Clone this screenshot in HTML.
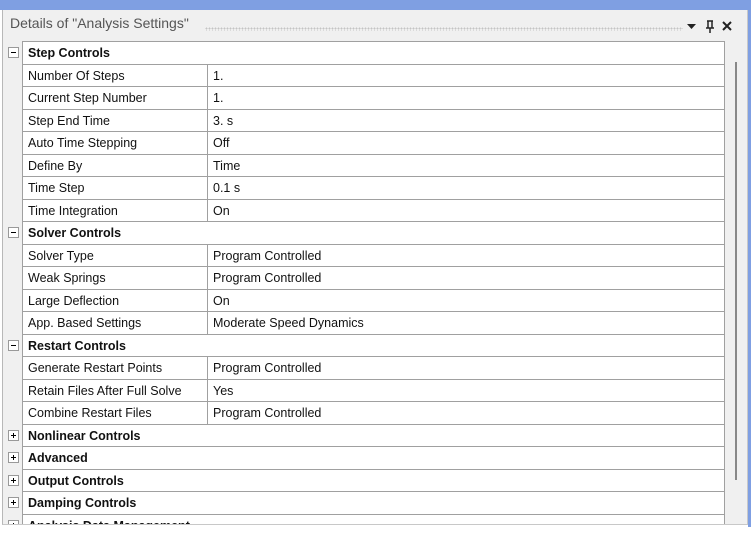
<!DOCTYPE html><html><head><style>
body{margin:0;width:751px;height:537px;background:#fff;position:relative;overflow:hidden;font-family:"Liberation Sans",sans-serif;}
.top{position:absolute;left:0;top:0;width:751px;height:10px;background:#7f9fe2}
.rs{position:absolute;left:748px;top:0;width:3px;height:527px;background:#7f9fe2}
.panel{position:absolute;left:2px;top:10px;width:746px;height:515px;background:#f0f0f0;border-left:1px solid #b8b8b8;border-bottom:1px solid #c8c8c8;border-right:1px solid #c8c8c8;overflow:hidden;box-sizing:border-box}
.title{position:absolute;left:7px;top:5px;font-size:14px;color:#555}
.dots{position:absolute;left:202px;top:17px;width:478px;height:4px;background-image:radial-gradient(#c4c4c4 0.8px,transparent 1px);background-size:3px 3px}
.tbl{position:absolute;left:19px;top:31px;width:701px;background:#fff;border-left:1px solid #a0a0a0;border-right:1px solid #a0a0a0}
.r{height:21.5px;border-top:1px solid #a0a0a0;position:relative;font-size:12.5px;color:#111;line-height:23px}
.r .k{position:absolute;left:5px}
.r .v{position:absolute;left:184px;top:0;bottom:0;border-left:1px solid #a0a0a0;padding-left:5px}
.r.g .k{font-weight:bold}
.bx{position:absolute;left:-15px;top:5px;width:11px;height:11px;border:1px solid #999;background:#fff;box-sizing:border-box}
.bx:before{content:"";position:absolute;left:2px;top:4px;width:5px;height:1px;background:#000}
.bx.p:after{content:"";position:absolute;left:4px;top:2px;width:1px;height:5px;background:#000}
.sb{position:absolute;left:732px;top:52px;width:2px;height:418px;background:#888}
</style></head><body>
<div class="top"></div><div class="rs"></div>
<div class="panel">
<div class="title">Details of "Analysis Settings"</div>
<div class="dots"></div>
<svg style="position:absolute;left:684px;top:9px" width="60" height="16"><path d="M0 5h9l-4.5 5z" fill="#222"/><path d="M20 2h6M21 2v7M25 2v7M19 9h8M23 9v5" stroke="#222" stroke-width="1.5" fill="none"/><path d="M36 3l8 8M44 3l-8 8" stroke="#222" stroke-width="2"/></svg>
<div class="sb"></div>
<div class="tbl">
<div class="r g"><span class="bx"></span><span class="k">Step Controls</span></div>
<div class="r"><span class="k">Number Of Steps</span><span class="v">1.</span></div>
<div class="r"><span class="k">Current Step Number</span><span class="v">1.</span></div>
<div class="r"><span class="k">Step End Time</span><span class="v">3. s</span></div>
<div class="r"><span class="k">Auto Time Stepping</span><span class="v">Off</span></div>
<div class="r"><span class="k">Define By</span><span class="v">Time</span></div>
<div class="r"><span class="k">Time Step</span><span class="v">0.1 s</span></div>
<div class="r"><span class="k">Time Integration</span><span class="v">On</span></div>
<div class="r g"><span class="bx"></span><span class="k">Solver Controls</span></div>
<div class="r"><span class="k">Solver Type</span><span class="v">Program Controlled</span></div>
<div class="r"><span class="k">Weak Springs</span><span class="v">Program Controlled</span></div>
<div class="r"><span class="k">Large Deflection</span><span class="v">On</span></div>
<div class="r"><span class="k">App. Based Settings</span><span class="v">Moderate Speed Dynamics</span></div>
<div class="r g"><span class="bx"></span><span class="k">Restart Controls</span></div>
<div class="r"><span class="k">Generate Restart Points</span><span class="v">Program Controlled</span></div>
<div class="r"><span class="k">Retain Files After Full Solve</span><span class="v">Yes</span></div>
<div class="r"><span class="k">Combine Restart Files</span><span class="v">Program Controlled</span></div>
<div class="r g"><span class="bx p"></span><span class="k">Nonlinear Controls</span></div>
<div class="r g"><span class="bx p"></span><span class="k">Advanced</span></div>
<div class="r g"><span class="bx p"></span><span class="k">Output Controls</span></div>
<div class="r g"><span class="bx p"></span><span class="k">Damping Controls</span></div>
<div class="r g"><span class="bx p"></span><span class="k">Analysis Data Management</span></div>
</div>
</div>
</body></html>
